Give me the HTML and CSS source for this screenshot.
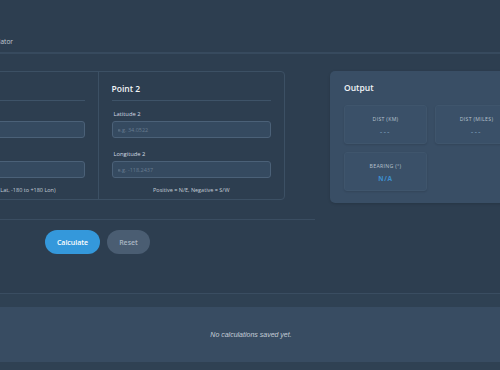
FILE: index.html
```html
<!DOCTYPE html>
<html lang="en">
<head>
    <meta charset="UTF-8">
    <meta name="viewport" content="width=device-width, initial-scale=1.0">
    <title>Coordinate Distance Calculator</title>

    <link rel="stylesheet" href="styles.css">
</head>
<body>
    <div class="page">
        <div class="header">
            <div class="tab">Distance Calculator</div>
        </div>

        <div class="main">
            <div class="inputs">
                <div class="pointCard">
                    <div class="point">
                        <h3>Point 1</h3>
                        <label>Latitude 1</label>
                        <input type="text" placeholder="e.g. 40.7128">
                        <label>Longitude 1</label>
                        <input type="text" placeholder="e.g. -74.0060">
                        <p class="hint">(Range: -90 to +90 Lat, -180 to +180 Lon)</p>
                    </div>
                    <div class="point">
                        <h3>Point 2</h3>
                        <label>Latitude 2</label>
                        <input type="text" placeholder="e.g. 34.0522">
                        <label>Longitude 2</label>
                        <input type="text" placeholder="e.g. -118.2437">
                        <p class="hint">Positive = N/E, Negative = S/W</p>
                    </div>
                </div>

                <div class="actions">
                    <button class="btn calc">Calculate</button>
                    <button class="btn reset">Reset</button>
                </div>
            </div>

            <div class="output">
                <h3>Output</h3>
                <div class="tiles">
                    <div class="tile">
                        <p class="tileLabel">Dist (km)</p>
                        <p class="tileValue dim">---</p>
                    </div>
                    <div class="tile">
                        <p class="tileLabel">Dist (miles)</p>
                        <p class="tileValue dim">---</p>
                    </div>
                    <div class="tile">
                        <p class="tileLabel">Bearing (°)</p>
                        <p class="tileValue">N/A</p>
                    </div>
                </div>
            </div>
        </div>

        <div class="history">
            <div class="historyPanel">
                <p class="empty">No calculations saved yet.</p>
            </div>
        </div>
    </div>
</body>
</html>
```

FILE: styles.css
```css
* {
    box-sizing: border-box;
    margin: 0;
    padding: 0;
}
body {
    background-color: #2d3e50;
    font-family: "Open Sans", "Noto Sans", sans-serif;
    color: #ecf0f1;
    overflow: hidden;
    height: 370px;
}
.page {
    margin-left: -120px;
    width: 740px;
}
.header {
    height: 54px;
    border-bottom: 2px solid #374a5e;
    display: flex;
    align-items: flex-end;
}
.tab {
    width: 133px;
    text-align: right;
    font-size: 6.5px;
    color: #c3ccd5;
    padding-bottom: 6px;
}
.main {
    display: flex;
    padding-top: 17px;
    height: 239px;
}
.inputs {
    width: 435px;
    padding: 0 30px;
}
.pointCard {
    display: grid;
    grid-template-columns: 1fr 1fr;
    border: 1px solid #3c5064;
    border-radius: 4px;
    height: 129px;
}
.point {
    padding: 11px 13px 0;
    display: flex;
    flex-direction: column;
}
.point + .point {
    border-left: 1px solid #3c5064;
}
.point h3 {
    font-size: 8.5px;
    font-weight: 600;
    color: #f2f5f7;
    padding-bottom: 6px;
    border-bottom: 1px solid #3e5368;
    margin-bottom: 9px;
}
.point label {
    font-size: 5.8px;
    font-weight: 500;
    color: #d3dbe3;
    margin-bottom: 3px;
    margin-left: 2px;
}
.point input {
    height: 17px;
    border: 1px solid #4b6178;
    border-radius: 3px;
    background-color: #354a60;
    padding: 0 5px;
    font-family: inherit;
    font-size: 5.5px;
    color: #ecf0f1;
    outline: none;
    margin-bottom: 12px;
}
.point input::placeholder {
    color: #687c90;
}
.hint {
    font-size: 5.5px;
    color: #c3ccd6;
    text-align: center;
    margin-top: -4px;
}
.actions {
    margin: 19px -30px 0;
    border-top: 1px solid #3a4d61;
    padding-top: 10px;
    display: flex;
    justify-content: center;
    gap: 7px;
}
.btn {
    height: 24px;
    border: none;
    border-radius: 12px;
    font-family: inherit;
    font-size: 7px;
    font-weight: 600;
    cursor: pointer;
}
.btn.calc {
    width: 55px;
    background-color: #3498db;
    color: #fff;
}
.btn.reset {
    width: 43px;
    background-color: #4a5d72;
    color: #a9b6c3;
}
.output {
    margin-left: 15px;
    width: 202px;
    height: 132px;
    background-color: #394e65;
    border-radius: 5px;
    padding: 11px 14px;
    box-shadow: 0 1px 3px rgba(0,0,0,0.15);
}
.output h3 {
    font-size: 8.5px;
    font-weight: 600;
    color: #f2f5f7;
    margin-bottom: 12px;
}
.tiles {
    display: grid;
    grid-template-columns: 83px 83px;
    gap: 8px;
}
.tile {
    height: 39px;
    border: 1px solid #3f556c;
    border-radius: 3px;
    background-color: #3a5068;
    box-shadow: 0 1px 2px rgba(0,0,0,0.12);
    display: flex;
    flex-direction: column;
    align-items: center;
    padding-top: 9px;
    gap: 4px;
}
.tileLabel {
    font-size: 5.2px;
    font-weight: 500;
    text-transform: uppercase;
    letter-spacing: 0.3px;
    color: #b7c2cd;
}
.tileValue {
    font-size: 6.5px;
    font-weight: 700;
    letter-spacing: 0.6px;
    color: #3d8fcf;
}
.tileValue.dim {
    letter-spacing: 1.5px;
    color: #6a88a5;
}
.history {
    border-top: 1px solid #3a4d61;
    background-color: #2f4153;
    padding-top: 13px;
    height: 77px;
}
.historyPanel {
    background-color: #384c62;
    height: 55px;
    display: flex;
    align-items: center;
    justify-content: center;
    padding-left: 2px;
}
.empty {
    font-family: "Liberation Sans", Arial, sans-serif;
    font-style: italic;
    font-size: 7px;
    color: #c5ced8;
}
```
